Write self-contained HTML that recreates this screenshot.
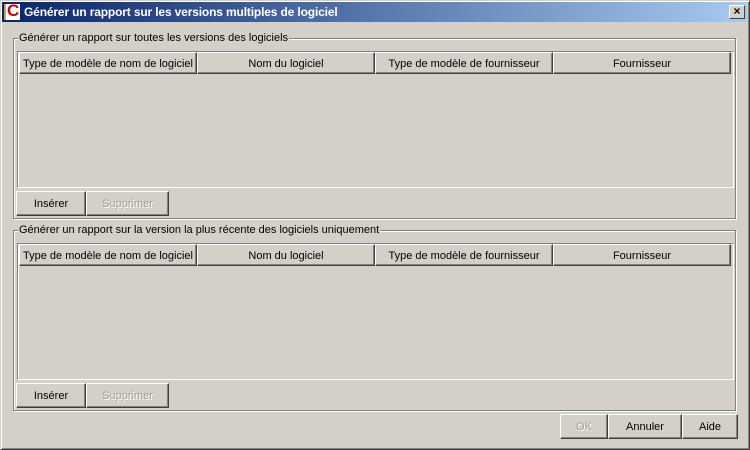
<!DOCTYPE html>
<html><head><style>
*{margin:0;padding:0;box-sizing:border-box}
body{width:750px;height:450px;background:#d4d0c8;font-family:"Liberation Sans",Arial,sans-serif;font-size:11px;color:#000;position:relative;overflow:hidden}
.a{position:absolute}
.win{left:0;top:0;width:750px;height:450px;border-top:1px solid #d4d0c8;border-left:1px solid #d4d0c8;border-right:1px solid #404040;border-bottom:1px solid #404040;box-shadow:inset 1px 1px 0 #fff,inset -1px -1px 0 #808080}
.title{left:2px;top:2px;width:745px;height:20px;background:linear-gradient(to right,#0a246a,#a6caf0);color:#fff;font-weight:bold;font-size:12px;letter-spacing:-0.15px;line-height:21px;padding-left:22px}
.ico{left:4px;top:4px;width:16px;height:16px;background:#fff;border-left:2px solid #c8a050}
.ico span{position:absolute;left:1px;top:-3px;color:#d00000;font-size:17px;font-weight:bold;line-height:20px}
.close{left:729px;top:5px;width:16px;height:14px;background:#d4d0c8;border-top:1px solid #fff;border-left:1px solid #fff;border-right:1px solid #404040;border-bottom:1px solid #404040;font-size:12px;line-height:11px;text-align:center;font-weight:bold}
.grp{border:1px solid #808080;box-shadow:1px 1px 0 #fff,inset 1px 1px 0 #fff}
.leg{background:#d4d0c8;padding:0 1px;line-height:13px}
.tbl{border-top:1px solid #808080;border-left:1px solid #808080;border-right:1px solid #fff;border-bottom:1px solid #fff;box-shadow:inset 1px 1px 0 #fff}
.h{height:22px;border-top:1px solid #fff;border-left:1px solid #fff;border-right:1px solid #404040;border-bottom:1px solid #404040;box-shadow:inset -1px -1px 0 #808080;text-align:center;line-height:22px;white-space:nowrap}
.b{height:25px;border-top:1px solid #fff;border-left:1px solid #fff;border-right:1px solid #404040;border-bottom:1px solid #404040;box-shadow:inset -1px -1px 0 #808080;text-align:center;line-height:25px}
.dis{color:#a0a0a0;text-shadow:1px 1px 0 #fff}
</style></head><body>
<div class="a win"></div>
<div class="a title">Générer un rapport sur les versions multiples de logiciel</div>
<div class="a ico"><span>C</span></div>
<div class="a close">×</div>

<div class="a grp" style="left:13px;top:38px;width:723px;height:181px"></div>
<div class="a leg" style="left:18px;top:32px">Générer un rapport sur toutes les versions des logiciels</div>
<div class="a tbl" style="left:17px;top:51px;width:717px;height:137px"></div>
<div class="a h" style="left:19px;top:52px;width:178px">Type de modèle de nom de logiciel</div>
<div class="a h" style="left:197px;top:52px;width:178px">Nom du logiciel</div>
<div class="a h" style="left:375px;top:52px;width:178px">Type de modèle de fournisseur</div>
<div class="a h" style="left:553px;top:52px;width:178px">Fournisseur</div>
<div class="a b" style="left:16px;top:191px;width:70px">Insérer</div>
<div class="a b dis" style="left:86px;top:191px;width:83px">Supprimer</div>

<div class="a grp" style="left:13px;top:230px;width:723px;height:181px"></div>
<div class="a leg" style="left:18px;top:224px">Générer un rapport sur la version la plus récente des logiciels uniquement</div>
<div class="a tbl" style="left:17px;top:243px;width:717px;height:137px"></div>
<div class="a h" style="left:19px;top:244px;width:178px">Type de modèle de nom de logiciel</div>
<div class="a h" style="left:197px;top:244px;width:178px">Nom du logiciel</div>
<div class="a h" style="left:375px;top:244px;width:178px">Type de modèle de fournisseur</div>
<div class="a h" style="left:553px;top:244px;width:178px">Fournisseur</div>
<div class="a b" style="left:16px;top:383px;width:70px">Insérer</div>
<div class="a b dis" style="left:86px;top:383px;width:83px">Supprimer</div>

<div class="a b dis" style="left:560px;top:414px;width:48px">OK</div>
<div class="a b" style="left:608px;top:414px;width:74px">Annuler</div>
<div class="a b" style="left:682px;top:414px;width:56px">Aide</div>
</body></html>
